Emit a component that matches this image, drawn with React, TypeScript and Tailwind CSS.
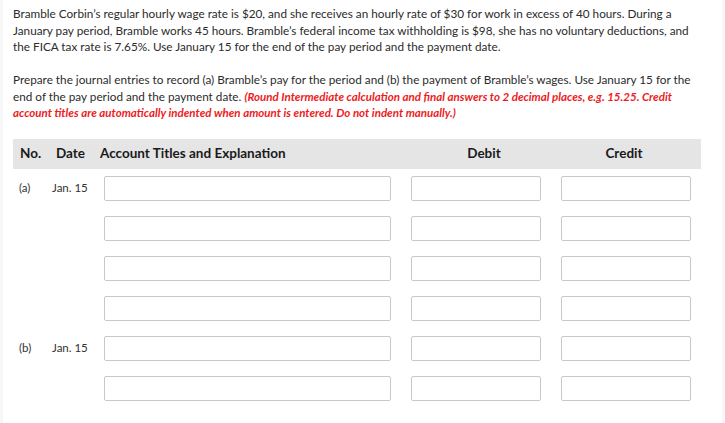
const rows = [
  { no: "(a)", date: "Jan. 15" },
  { no: "", date: "" },
  { no: "", date: "" },
  { no: "", date: "" },
  { no: "(b)", date: "Jan. 15" },
  { no: "", date: "" },
];

const Box = ({ w }: { w: string }) => (
  <div className={`${w} h-[25px] border border-[#c9c9c9] rounded-[2px] bg-white`} />
);

const App = () => {
  return (
    <div
      className="min-h-[423px] bg-[#f7f7f7] flex"
      style={{ fontFamily: "Lato, 'Noto Sans', sans-serif" }}
    >
      <div className="ml-[3px] w-[719px] bg-white pl-[10px] pr-[19px] pt-[6px] pb-[20px] text-[#2b2b2b]">
        <p className="text-[11.75px] leading-[16.5px]">
          Bramble Corbin’s regular hourly wage rate is $20, and she receives an hourly rate of $30 for
          work in excess of 40 hours. During a January pay period, Bramble works 45 hours. Bramble’s
          federal income tax withholding is $98, she has no voluntary deductions, and the FICA tax rate
          is 7.65%. Use January 15 for the end of the pay period and the payment date.
        </p>
        <p className="mt-[16.5px] text-[11.75px] leading-[16.5px]">
          Prepare the journal entries to record (a) Bramble’s pay for the period and (b) the payment of
          Bramble’s wages. Use January 15 for the end of the pay period and the payment date.{" "}
          <span className="text-[11.55px] font-bold italic text-[#ec1c24]">
            (Round Intermediate calculation and final answers to 2 decimal places, e.g. 15.25. Credit
            account titles are automatically indented when amount is entered. Do not indent manually.)
          </span>
        </p>

        <div className="mt-[17px] w-[688px] h-[30px] bg-[#e5e5e5] flex items-center text-[13.5px] font-bold text-[#1a1a1a]">
          <div className="w-[43px] pl-[7px]">No.</div>
          <div className="w-[44px]">Date</div>
          <div className="w-[311px]">Account Titles and Explanation</div>
          <div className="w-[146px] text-center">Debit</div>
          <div className="w-[134px] text-center">Credit</div>
        </div>

        <div className="pt-[7px]">
          {rows.map((r, i) => (
            <div key={i} className="flex items-center h-[25px] mb-[15px] text-[11.5px] text-[#333]">
              <div className="w-[39px] pl-[6px]">{r.no}</div>
              <div className="w-[52px]">{r.date}</div>
              <Box w="w-[287px]" />
              <div className="w-[20px]" />
              <Box w="w-[130px]" />
              <div className="w-[20px]" />
              <Box w="w-[130px]" />
            </div>
          ))}
        </div>
      </div>
    </div>
  );
};

export default App;
